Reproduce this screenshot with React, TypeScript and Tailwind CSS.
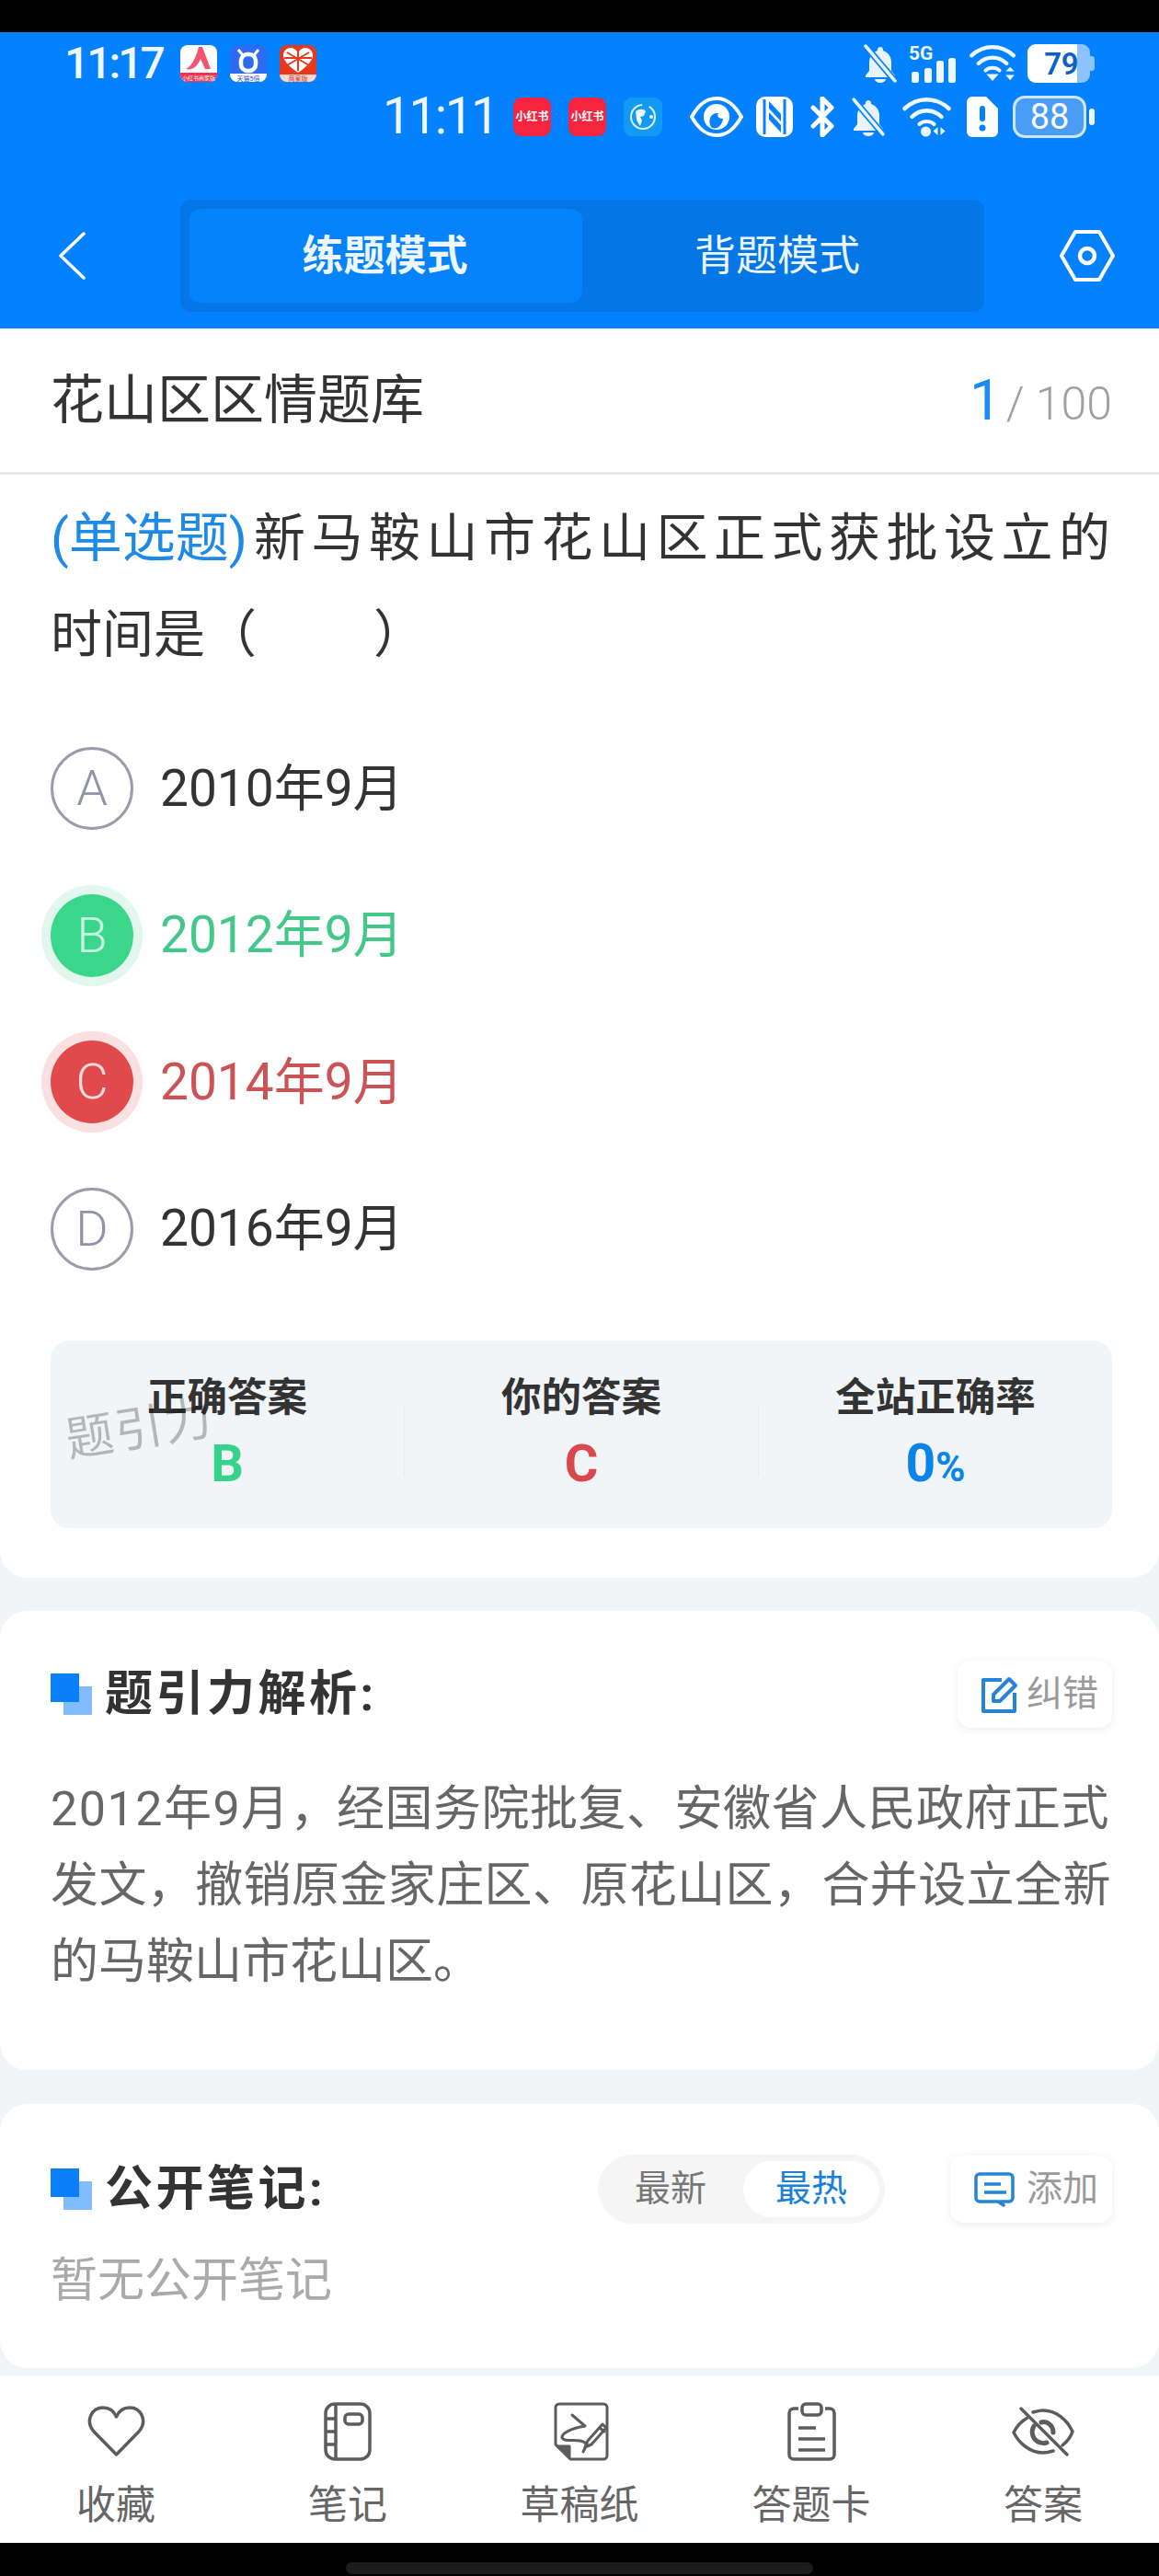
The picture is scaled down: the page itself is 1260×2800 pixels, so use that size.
import React from "react";

const Bell = ({ className = "" }: { className?: string }) => (
  <svg viewBox="0 0 38 42" className={className}>
    <path d="M19 3c-2 0-3 1.400-3 3v1C10 9 7 14 7 20v9l-4 5v2h32v-2l-4-5v-9c0-6-3-11-9-13V6c0-1.600-1-3-3-3z" fill="#e8f3ff" />
    <path d="M13 38h12a6 4 0 0 1-12 0z" fill="#e8f3ff" />
    <path d="M3 2l32 38" stroke="#0381fe" strokeWidth="7" />
    <path d="M3 2l32 38" stroke="#e8f3ff" strokeWidth="3.500" strokeLinecap="round" />
  </svg>
);

const Wifi = ({ className = "", tail }: { className?: string; tail: "updown" | "lr" }) => (
  <svg viewBox="0 0 54 44" className={className} fill="none" stroke="#eef7ff" strokeLinecap="round">
    <path d="M3 13C17 0 37 0 51 13" strokeWidth="4.500" />
    <path d="M11 22C20 13 34 13 43 22" strokeWidth="4.500" />
    <path d="M19 30C23 26 31 26 35 30" strokeWidth="4" />
    {tail === "updown" ? (
      <>
        <path d="M20 34h14l-7 8z" fill="#eef7ff" stroke="none" />
        <path d="M42 31l5-5 5 5zM42 35h10l-5 6z" fill="#eef7ff" stroke="none" />
      </>
    ) : (
      <>
        <circle cx="26" cy="38" r="5.500" fill="#eef7ff" stroke="none" />
        <path d="M39 33v9l-5-4.500zM42 33v9l5-4.500z" fill="#eef7ff" stroke="none" />
      </>
    )}
  </svg>
);

const RedBook = () => (
  <div className="flex h-[42px] w-[41px] items-center justify-center rounded-[9px] bg-[#f5243f] text-[12px] font-bold leading-none text-white">
    小红书
  </div>
);

const Squares = () => (
  <div className="relative h-[45px] w-[45px] shrink-0">
    <div className="absolute left-[14px] top-[14px] h-[31px] w-[31px] bg-[#80bcff]" />
    <div className="absolute left-0 top-0 h-[31px] w-[31px] bg-[#0a80f8]" />
  </div>
);

const Option = ({
  letter,
  text,
  tone,
}: {
  letter: string;
  text: string;
  tone: "plain" | "ok" | "bad";
}) => {
  const circle =
    tone === "ok"
      ? "bg-[#3ad68a] text-[#c9f6e0] shadow-[0_0_0_10px_#e2f7ed]"
      : tone === "bad"
        ? "bg-[#e04a4c] text-[#fbdcdc] shadow-[0_0_0_10px_#fae0e0]"
        : "border-[3px] border-[#9a9cab] text-[#9095a5]";
  const label = tone === "ok" ? "text-[#43c88a]" : tone === "bad" ? "text-[#cc5256]" : "text-[#333333]";
  return (
    <div className="flex h-[90px] items-center">
      <div className={`flex h-[90px] w-[90px] items-center justify-center rounded-full text-[54px] font-light leading-none ${circle}`}>
        {letter}
      </div>
      <div className={`ml-[29px] text-[55px] leading-none ${label}`}>{text}</div>
    </div>
  );
};

const NavItem = ({ label, children }: { label: string; children: React.ReactNode }) => (
  <div className="flex flex-col items-center pt-[29px]">
    <div className="flex h-[64px] items-center justify-center">{children}</div>
    <div className="mt-[23px] flex h-[50px] items-center text-[43px] leading-none text-[#666666]">{label}</div>
  </div>
);

export default function App() {
  return (
    <div className="flex h-[2800px] w-[1260px] flex-col overflow-hidden bg-[#f1f5f8] font-[family-name:Roboto,'Noto_Sans_CJK_SC',sans-serif]">
      <div className="h-[35px] shrink-0 bg-black" />

      <header className="h-[322px] shrink-0 bg-[#0381fe] pt-[13px] text-[#eef7ff]">
        {/* first status row */}
        <div className="flex h-[42px] items-center pl-[70px]">
          <span className="w-[126px] text-[48px] font-medium leading-none tracking-[-3px]">11:17</span>
          <svg viewBox="0 0 40 40" className="h-[40px] w-[40px]">
            <rect width="40" height="40" rx="8" fill="#fff" />
            <path d="M0 30h40v2a8 8 0 0 1-8 8H8a8 8 0 0 1-8-8z" fill="#f0344f" />
            <path d="M6 26C14 22 18 10 20 2h4l9 24h-6l-5-11C19 22 14 28 6 26z" fill="#f0566d" />
            <text x="20" y="38" fontSize="6" fill="#fff" textAnchor="middle">小红书商家版</text>
          </svg>
          <svg viewBox="0 0 40 40" className="ml-[14px] h-[40px] w-[40px]">
            <rect width="40" height="40" rx="8" fill="#2f6bf0" />
            <path d="M0 31h40v1a8 8 0 0 1-8 8H8a8 8 0 0 1-8-8z" fill="#fff" />
            <rect x="12" y="10" width="16" height="18" rx="7" fill="none" stroke="#fff" strokeWidth="4.500" />
            <path d="M9 5l5 6M31 5l-5 6" stroke="#fff" strokeWidth="3" />
            <text x="20" y="39" fontSize="7" fill="#1f4fd0" textAnchor="middle">天猫5倍</text>
          </svg>
          <svg viewBox="0 0 40 40" className="ml-[14px] h-[40px] w-[40px]">
            <rect width="40" height="40" rx="8" fill="#e8391f" />
            <path d="M0 32h40a8 8 0 0 1-8 8H8a8 8 0 0 1-8-8z" fill="#fbd8d0" />
            <path d="M20 30C10 23 4 17 4 11c0-5 4-8 8-8 3 0 6 2 8 5 2-3 5-5 8-5 4 0 8 3 8 8 0 6-6 12-16 19z" fill="#fff" />
            <path d="M8 8l24 14M32 8L8 22M20 6v22M5 14h30" stroke="#e8391f" strokeWidth="2" />
            <text x="20" y="39" fontSize="7" fill="#c8301c" textAnchor="middle">商家版</text>
          </svg>
          <Bell className="ml-[594px] h-[42px] w-[38px]" />
          <div className="relative ml-[12px] h-[42px] w-[52px]">
            <span className="absolute left-0 top-0 text-[21px] font-bold leading-none">5G</span>
            <svg viewBox="0 0 52 42" className="h-[42px] w-[52px]" fill="#eef7ff">
              <rect x="3" y="30" width="8" height="12" rx="2.500" />
              <rect x="17" y="26" width="8" height="16" rx="2.500" />
              <rect x="30" y="18" width="8" height="24" rx="2.500" />
              <rect x="43" y="15" width="8" height="27" rx="2.500" />
            </svg>
          </div>
          <Wifi tail="updown" className="ml-[12px] h-[42px] w-[54px]" />
          <div className="ml-[11px] flex h-[42px] w-[68px] overflow-hidden rounded-[9px] bg-[#8cc3ff]">
            <div className="flex h-full w-[54px] items-center justify-end bg-white text-[33px] font-semibold leading-none text-[#0a62c4]">
              <span className="relative z-10 -mr-[1px] tracking-[-0.5px]">79</span>
            </div>
          </div>
          <div className="h-[16px] w-[5px] rounded-r-[3px] bg-[#8cc3ff]" />
        </div>

        {/* second status row */}
        <div className="mt-[15px] flex h-[43px] items-center pl-[416px]">
          <span className="w-[142px] text-[55px] leading-none tracking-[-2.500px]">11:11</span>
          <RedBook />
          <div className="ml-[19px]">
            <RedBook />
          </div>
          <svg viewBox="0 0 42 42" className="ml-[19px] h-[42px] w-[42px]" fill="none">
            <rect width="42" height="42" rx="9" fill="#129af3" />
            <circle cx="21" cy="21" r="13" stroke="#dff3ff" strokeWidth="2" strokeDasharray="60 8" />
            <path d="M13 15c4-3 9-3 11 0l-2 5-4 1 2 4-2 6c-2-2-3-5-4-7z" fill="#eaf7ff" />
            <circle cx="30" cy="21" r="2" fill="#eaf7ff" />
          </svg>
          <svg viewBox="0 0 58 46" className="ml-[30px] h-[46px] w-[58px]" fill="none">
            <path d="M2 23C10 9 18 3 29 3s19 6 27 20c-8 14-16 20-27 20S10 37 2 23z" stroke="#fff" strokeWidth="4" />
            <circle cx="29" cy="23" r="14" fill="#fff" />
            <path d="M23 34c-4-8 0-16 8-15-2 3 0 6 5 6-1 8-8 13-13 9z" fill="#0381fe" />
          </svg>
          <svg viewBox="0 0 40 44" className="ml-[14px] h-[44px] w-[40px]">
            <rect width="40" height="44" rx="10" fill="#fff" />
            <path d="M9 3v38M31 3v38" stroke="#0381fe" strokeWidth="3" />
            <path d="M14 5l13 14v8L14 13zM14 17l13 14v8L14 25z" fill="#0381fe" />
          </svg>
          <svg viewBox="0 0 28 44" className="ml-[18px] h-[44px] w-[28px]" fill="none" stroke="#fff" strokeWidth="5" strokeLinecap="round" strokeLinejoin="round">
            <path d="M4 12l20 20-10 10V2l10 10L4 32" />
          </svg>
          <Bell className="ml-[17px] h-[44px] w-[38px]" />
          <Wifi tail="lr" className="ml-[17px] h-[44px] w-[55px]" />
          <svg viewBox="0 0 34 44" className="ml-[16px] h-[44px] w-[34px]">
            <path d="M6 0h15l13 13v25a6 6 0 0 1-6 6H6a6 6 0 0 1-6-6V6a6 6 0 0 1 6-6z" fill="#fff" />
            <rect x="14" y="10" width="6" height="17" rx="3" fill="#0381fe" />
            <circle cx="17" cy="34" r="3.500" fill="#0381fe" />
          </svg>
          <div className="ml-[16px] flex h-[46px] w-[80px] items-center justify-center rounded-[13px] border-[3px] border-[#cfe6ff] bg-[#4a9df5] text-[38px] leading-none text-white">
            88
          </div>
          <div className="ml-[3px] h-[18px] w-[6px] rounded-[3px] bg-[#eef7ff]" />
        </div>

        {/* nav */}
        <div className="mt-[69px] flex h-[122px] items-center">
          <svg viewBox="0 0 30 52" className="ml-[63px] h-[52px] w-[30px]" fill="none" stroke="#fff" strokeWidth="3.500" strokeLinecap="round" strokeLinejoin="round">
            <path d="M28 2L3 26l25 24" />
          </svg>
          <div className="ml-[103px] flex h-[122px] w-[874px] rounded-[12px] bg-[#0476e6] py-[10px] pl-[10px] pr-[10px]">
            <div className="flex w-[427px] items-center justify-center rounded-[12px] bg-[#0583fd] pr-[2px] text-[45px] font-bold leading-none text-[#eef7ff]">
              练题模式
            </div>
            <div className="flex flex-1 items-center justify-center pr-[3px] text-[45px] leading-none text-[#eaf5ff]">背题模式</div>
          </div>
          <svg viewBox="0 0 60 56" className="ml-[82px] h-[56px] w-[60px]" fill="none" stroke="#fff" strokeWidth="4" strokeLinejoin="round">
            <path d="M17 2h26l15 26-15 26H17L2 28z" />
            <circle cx="30" cy="28" r="8" strokeWidth="4.500" />
          </svg>
        </div>
      </header>

      {/* question card */}
      <section className="h-[1358px] shrink-0 rounded-b-[30px] bg-white">
        <div className="flex h-[159px] items-center justify-between border-b-[3px] border-[#e8e8e8] pl-[55px] pr-[51px]">
          <div className="text-[58px] leading-none text-[#333333]">花山区区情题库</div>
          <div className="flex items-baseline leading-none">
            <span className="text-[62px] text-[#1a8cf0]">1</span>
            <span className="ml-[5px] text-[50px] font-light text-[#a0a0a0]">/ 100</span>
          </div>
        </div>

        <div className="pl-[55px] pr-[51px] pt-[16px]">
          <div className="flex h-[105px] items-center whitespace-nowrap text-[56px] leading-none text-[#333333]">
            <span className="text-[58px] text-[#1c8ae6]">(单选题)</span>
            <span className="ml-[7px] tracking-[6.500px]">新马鞍山市花山区正式获批设立的</span>
          </div>
          <div className="flex h-[105px] items-center whitespace-nowrap text-[56px] leading-none text-[#333333]">
            <span>时间是（</span>
            <span className="w-[127px]" />
            <span>）</span>
          </div>

          <div className="mt-[70px] flex flex-col gap-[69.500px]">
            <Option letter="A" text="2010年9月" tone="plain" />
            <Option letter="B" text="2012年9月" tone="ok" />
            <Option letter="C" text="2014年9月" tone="bad" />
            <Option letter="D" text="2016年9月" tone="plain" />
          </div>

          <div className="relative mt-[76px] flex h-[204px] rounded-[20px] bg-[#f1f5f8] text-center">
            <div className="flex-1 pt-[38px]">
              <div className="flex h-[50px] items-center justify-center text-[43.500px] font-bold leading-none text-[#333333]">正确答案</div>
              <div className="mt-[16px] flex h-[60px] items-center justify-center text-[56px] font-bold leading-none text-[#38d38a]">B</div>
            </div>
            <div className="mt-[70px] h-[78px] w-px bg-[#e8ecf0]" />
            <div className="flex-1 pt-[38px]">
              <div className="flex h-[50px] items-center justify-center text-[43.500px] font-bold leading-none text-[#333333]">你的答案</div>
              <div className="mt-[16px] flex h-[60px] items-center justify-center text-[56px] font-bold leading-none text-[#d9484d]">C</div>
            </div>
            <div className="mt-[70px] h-[78px] w-px bg-[#e8ecf0]" />
            <div className="flex-1 pt-[38px]">
              <div className="flex h-[50px] items-center justify-center text-[43.500px] font-bold leading-none text-[#333333]">全站正确率</div>
              <div className="mt-[16px] flex h-[60px] items-baseline justify-center font-bold leading-[60px] text-[#0a84e8]">
                <span className="text-[57px]">0</span>
                <span className="text-[44px]">%</span>
              </div>
            </div>
            <div className="absolute left-[16px] top-[71px] -rotate-[9deg] text-[52px] leading-none tracking-[2px] text-[#00000040]">
              题引力
            </div>
          </div>
        </div>
      </section>

      {/* analysis card */}
      <section className="mt-[36px] h-[499px] shrink-0 rounded-[30px] bg-white pl-[55px] pr-[51px] pt-[54px]">
        <div className="flex h-[73px] items-center justify-between">
          <div className="flex items-center">
            <Squares />
            <span className="ml-[14px] text-[52px] font-bold leading-none tracking-[3.500px] text-[#333333]">题引力解析:</span>
          </div>
          <div className="flex h-[73px] w-[168px] items-center rounded-[14px] bg-white pl-[26px] shadow-[0_2px_10px_rgba(0,0,0,0.08)]">
            <svg viewBox="0 0 40 40" className="h-[40px] w-[40px] shrink-0" fill="none" stroke="#2384d8" strokeWidth="4" strokeLinejoin="round">
              <path d="M22 4H2v34h34V18" />
              <path d="M13 20L30 3l7 7-17 17h-7z" />
            </svg>
            <span className="ml-[9px] whitespace-nowrap text-[39px] leading-none text-[#9a9a9a]">纠错</span>
          </div>
        </div>
        <div className="mt-[47px] text-[52px] text-[#666666]">
          <div className="flex h-[83px] items-center whitespace-nowrap leading-none">
            <span className="w-[311px] tracking-[1.500px]">2012年9月，</span>
            <span className="tracking-[0.500px]">经国务院批复、安徽省人民政府正式</span>
          </div>
          <div className="flex h-[83px] items-center whitespace-nowrap leading-none tracking-[0.400px]">发文，撤销原金家庄区、原花山区，合并设立全新</div>
          <div className="flex h-[83px] items-center whitespace-nowrap leading-none">的马鞍山市花山区。</div>
        </div>
      </section>

      {/* notes card */}
      <section className="mt-[37px] h-[287px] shrink-0 rounded-[30px] bg-white pl-[55px] pr-[51px] pt-[55px]">
        <div className="flex h-[75px] items-center">
          <Squares />
          <span className="ml-[14px] text-[52px] font-bold leading-none tracking-[3.500px] text-[#333333]">公开笔记:</span>
          <div className="ml-auto flex h-[75px] w-[312px] items-center rounded-full bg-[#f5f5f5] pr-[6px]">
            <div className="flex h-full w-[158px] items-center justify-center text-[39px] leading-none text-[#777777]">最新</div>
            <div className="flex h-[61px] w-[148px] items-center justify-center rounded-full bg-white text-[39px] leading-none text-[#1a80d9]">最热</div>
          </div>
          <div className="ml-[71px] flex h-[73px] w-[176px] items-center rounded-[14px] bg-white pl-[26px] shadow-[0_2px_10px_rgba(0,0,0,0.08)]">
            <svg viewBox="0 0 44 38" className="h-[38px] w-[44px] shrink-0" fill="none" stroke="#2384d8" strokeWidth="3.500" strokeLinejoin="round">
              <path d="M6 2h32a4 4 0 0 1 4 4v22a4 4 0 0 1-4 4H30l-2 0 4 4-6-4H6a4 4 0 0 1-4-4V6a4 4 0 0 1 4-4z" />
              <path d="M11 13h18M11 22h24" />
            </svg>
            <span className="ml-[13px] whitespace-nowrap text-[39px] leading-none text-[#9a9a9a]">添加</span>
          </div>
        </div>
        <div className="mt-[36px] flex h-[50px] items-center text-[51px] leading-none text-[#aaaaaa]">暂无公开笔记</div>
      </section>

      <nav className="mt-[8px] grid h-[182px] shrink-0 grid-cols-5 bg-white">
        <NavItem label="收藏">
          <svg viewBox="0 0 63 56" className="h-[56px] w-[63px]" fill="none" stroke="#5c5c5c" strokeWidth="3.500" strokeLinejoin="round">
            <path d="M31.500 53L7 28C-3 16 5 2 17 2c7 0 12 4 14.500 10C34 6 39 2 46 2c12 0 20 14 10 26z" />
          </svg>
        </NavItem>
        <NavItem label="笔记">
          <svg viewBox="0 0 52 64" className="h-[64px] w-[52px]" fill="none" stroke="#5c5c5c" strokeWidth="3.500" strokeLinejoin="round">
            <rect x="2" y="2" width="48" height="60" rx="10" />
            <path d="M13 2v60M2 18h11M2 32h11M2 46h11" />
            <rect x="23" y="13" width="19" height="11" rx="4" />
          </svg>
        </NavItem>
        <NavItem label="草稿纸">
          <svg viewBox="0 0 60 64" className="ml-[3px] h-[64px] w-[60px]" fill="none" stroke="#5c5c5c" strokeWidth="3" strokeLinejoin="round" strokeLinecap="round">
            <path d="M6 2h48a4 4 0 0 1 4 4v52a4 4 0 0 1-4 4H18L2 46V6a4 4 0 0 1 4-4z" />
            <path d="M4 48h13v12z" fill="#5c5c5c" />
            <path d="M20 14l14 12C20 28 5 35 10 40c5 4 20-2 26 6l-4 8" />
            <path d="M53 24L37 42l-3 7 7-3 16-18z" />
            <path d="M50 28l5 4" />
          </svg>
        </NavItem>
        <NavItem label="答题卡">
          <svg viewBox="0 0 55 64" className="h-[64px] w-[55px]" fill="none" stroke="#5c5c5c" strokeWidth="3.500" strokeLinejoin="round">
            <path d="M13 7H8a5 5 0 0 0-5 5v45a5 5 0 0 0 5 5h39a5 5 0 0 0 5-5V12a5 5 0 0 0-5-5h-5" />
            <rect x="17" y="2" width="21" height="12" rx="4" />
            <path d="M13 28h19M13 40h29M13 52h29" />
          </svg>
        </NavItem>
        <NavItem label="答案">
          <svg viewBox="0 0 68 56" className="h-[56px] w-[68px]" fill="none" stroke="#5c5c5c" strokeWidth="3.500" strokeLinecap="round">
            <path d="M10 3l50 50" />
            <path d="M17 13C10 17 5 23 2 29c6 12 18 22 32 22 4 0 8-1 11-2" />
            <path d="M23 7c4-1 7-2 11-2 14 0 26 10 32 23-2 6-6 11-11 15" />
            <path d="M24 22c-4 7-1 16 7 18 3 1 5 1 7 0" strokeWidth="5" />
            <path d="M32 18c7-2 13 4 13 11" strokeWidth="5" />
          </svg>
        </NavItem>
      </nav>

      <div className="flex flex-1 items-end justify-center bg-black pb-[2px]">
        <div className="h-[13px] w-[508px] rounded-full bg-[#1c1c1c]" />
      </div>
    </div>
  );
}
